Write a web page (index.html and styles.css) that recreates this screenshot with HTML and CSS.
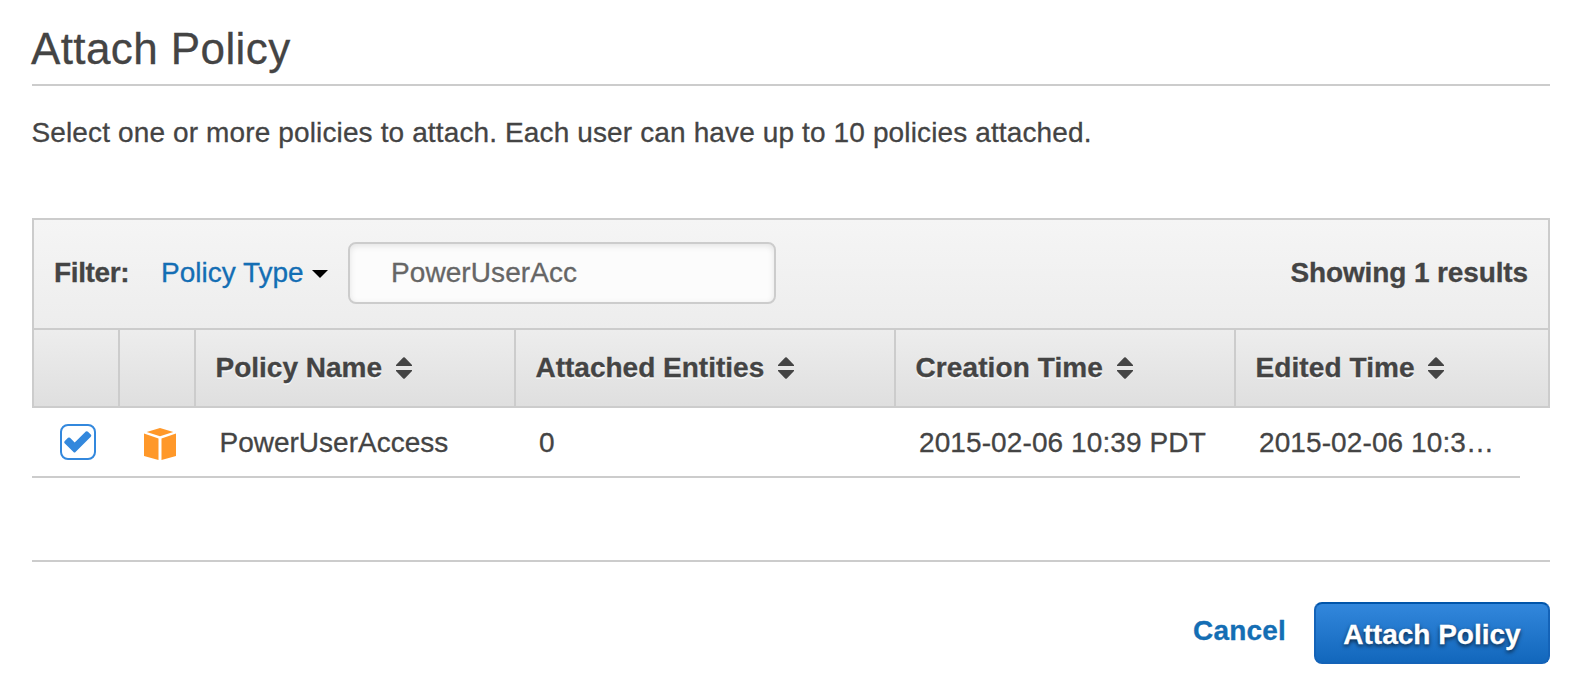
FILE: index.html
```html
<!DOCTYPE html>
<html lang="en">
<head>
<meta charset="utf-8">
<title>Attach Policy</title>
<link rel="stylesheet" href="styles.css">
</head>
<body>
<svg class="defs" width="0" height="0" aria-hidden="true">
  <symbol id="sort" viewBox="0 0 16 22"><path d="M7.2.6Q8 0 8.800.6L16 8v1H0V8zM0 13h16v1L8.800 21.400Q8 22 7.200 21.400L0 14z"/></symbol>
</svg>
<main class="page">
  <h1 class="title"><span>Attach Policy</span></h1>
  <p class="intro">Select one or more policies to attach. Each user can have up to 10 policies attached.</p>

  <section class="panel">
    <div class="filter">
      <span class="filter-label">Filter:</span>
      <a class="filter-type"><span>Policy Type</span><svg class="caret" viewBox="0 0 16 8"><path d="M0 0h16L8 8z"/></svg></a>
      <input class="search" type="text" value="PowerUserAcc">
      <span class="count">Showing 1 results</span>
    </div>
    <div class="cols head">
      <div class="th"></div>
      <div class="th"></div>
      <div class="th"><span>Policy Name</span><svg class="sort"><use href="#sort"/></svg></div>
      <div class="th"><span>Attached Entities</span><svg class="sort"><use href="#sort"/></svg></div>
      <div class="th creation"><span>Creation Time</span><svg class="sort"><use href="#sort"/></svg></div>
      <div class="th edited"><span>Edited Time</span><svg class="sort"><use href="#sort"/></svg></div>
    </div>
  </section>
  <div class="cols row">
    <div class="td td-check"><span class="check"><svg viewBox="0 0 36 36"><path d="M4.600 17.200L8 13.800Q9 13 10 13.800L14.700 18.400 25.800 7.600Q27 6.700 28 7.700L31 10.700Q31.700 11.700 30.800 12.700L15.500 28Q14.500 29 13.500 28L4.600 19.200Q3.700 18.200 4.600 17.200z" fill="#3388dd"/></svg></span></div>
    <div class="td td-icon"><svg class="cube" viewBox="0 0 32 32"><path d="M16 0l13.300 4L16 8.200 2.700 4zM0 5.500l14.500 5V32L0 28zM32 5.500l-14.500 5V32L32 28z"/></svg></div>
    <div class="td name">PowerUserAccess</div>
    <div class="td">0</div>
    <div class="td date">2015-02-06 10:39 PDT</div>
    <div class="td date">2015-02-06 10:3…</div>
  </div>

  <footer class="actions">
    <a class="cancel">Cancel</a>
    <button class="attach" type="button"><span>Attach Policy</span></button>
  </footer>
</main>
</body>
</html>
```

FILE: styles.css
```css
* { box-sizing: border-box; }
body {
  margin: 0;
  background: #fff;
  color: #444;
  font: 28px/32px "Liberation Sans", Arial, sans-serif;
  -webkit-text-stroke: .3px;
}
.defs { display: block; }
svg { flex: none; }
.page { padding: 23px 44px 0 32px; }
.title {
  height: 63px;
  margin: 0;
  border-bottom: 2px solid #ccc;
  font-size: 44px;
  font-weight: 400;
  line-height: 52px;
  letter-spacing: .4px;
  text-indent: -1px;
}
.intro { margin: 31px 0 69px; letter-spacing: .13px; text-indent: -.5px; white-space: nowrap; }
.panel { border: 2px solid #ccc; }
.filter {
  display: flex;
  height: 108px;
  padding: 0 20px;
  background: linear-gradient(#f5f5f5, #ededed);
}
.filter > span, .filter-type { padding-top: 37px; white-space: nowrap; }
.filter-label { width: 107px; font-weight: 700; letter-spacing: -.35px; }
.filter-type { display: flex; width: 187px; color: #146eb4; }
.caret { width: 16px; height: 8px; margin: 13px 0 0 8px; fill: #000; }
.search {
  width: 428px;
  height: 62px;
  margin: 22px 0 0;
  padding: 0 0 1px 41px;
  border: 2px solid #ccc;
  border-radius: 8px;
  background: #fcfcfc;
  box-shadow: inset 0 2px 6px rgba(0, 0, 0, .1);
  color: #666;
  font: inherit;
  letter-spacing: .08px;
  outline: 0;
}
.count { margin-left: auto; font-weight: 700; letter-spacing: -.12px; }
.cols { display: grid; grid-template-columns: 84px 76px 320px 380px 340px 1fr; }
.head {
  height: 78px;
  border-top: 2px solid #ccc;
  background: linear-gradient(#ededed, #dfdfdf);
  font-weight: 700;
  text-shadow: 0 2px 0 #f5f5f5;
}
.th { display: flex; padding: 22px 0 0 19.500px; white-space: nowrap; }
.th + .th { border-left: 2px solid #ccc; }
.creation, .edited { letter-spacing: .1px; }
.sort { width: 16px; height: 22px; margin: 5px 0 0 13.500px; fill: #444; }
.row { width: 1488px; height: 70px; padding-left: 2px; border-bottom: 2px solid #ccc; }
.td { padding: 19px 0 0 25px; white-space: nowrap; }
.name { padding-left: 25.500px; }
.date { letter-spacing: .1px; }
.td-check { padding: 16px 0 0 26px; }
.td-icon { padding: 20px 0 0 26px; }
.check {
  display: block;
  width: 36px;
  height: 36px;
  border: 2px solid #38d;
  border-radius: 8px;
}
.check svg { display: block; width: 36px; height: 36px; margin: -2px; }
.cube { display: block; width: 32px; height: 32px; fill: #ff9829; }
.actions {
  display: flex;
  justify-content: flex-end;
  margin-top: 82px;
  padding-top: 40px;
  border-top: 2px solid #ccc;
  font-weight: 700;
}
.cancel { width: 121px; padding-top: 13px; color: #146eb4; letter-spacing: .2px; }
.attach {
  width: 236px;
  height: 62px;
  padding: 3px 0 0;
  border: 2px solid #1463b8;
  border-top-color: #0055aa;
  border-radius: 8px;
  background: linear-gradient(#38d, #1166bb) border-box;
  color: #fff;
  font: inherit;
  text-shadow: 0 2px 4px rgba(0, 0, 0, .75);
}
```
